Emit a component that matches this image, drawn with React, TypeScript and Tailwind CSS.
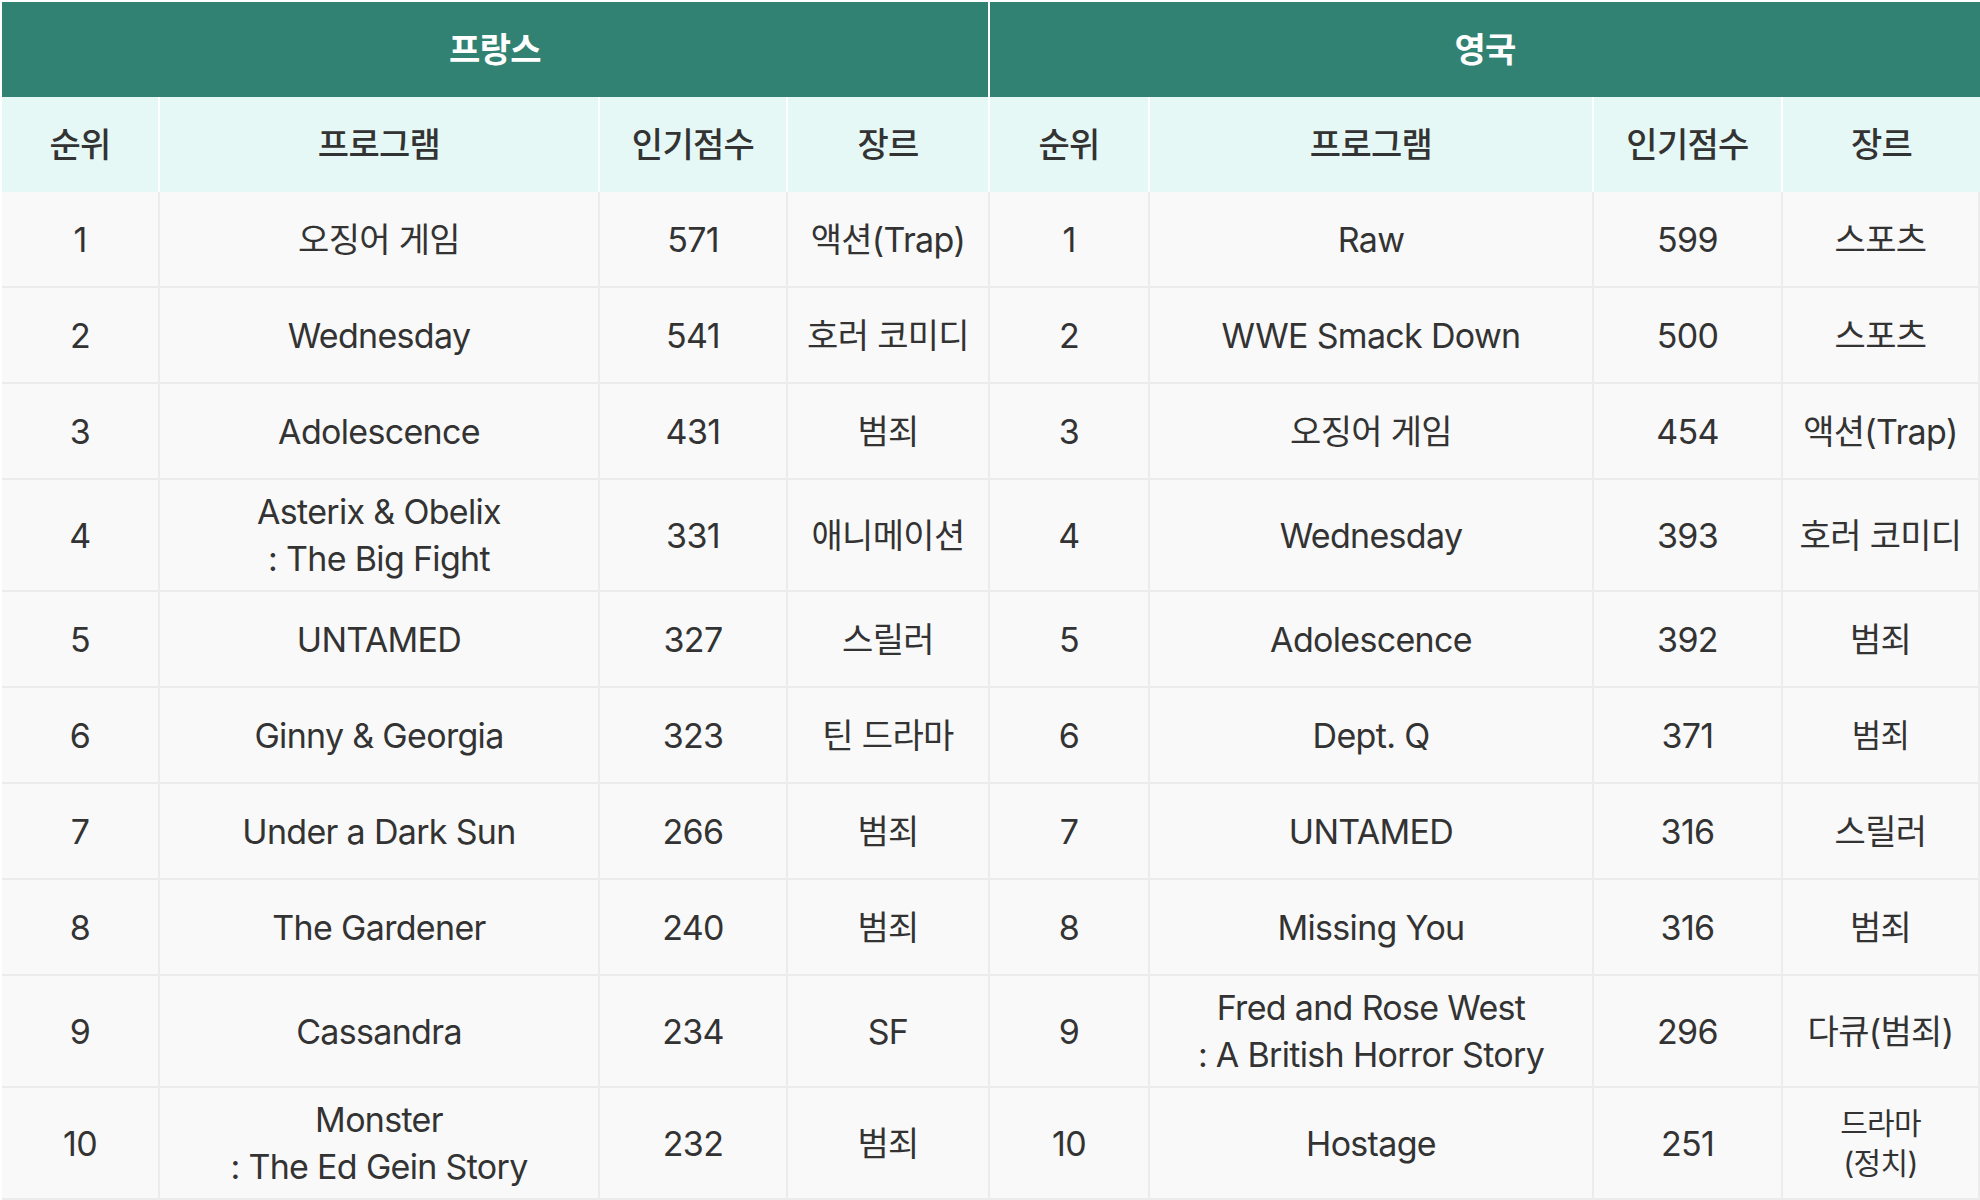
import React from "react";

type Row = {
  rank: number;
  title: string[];
  score: string;
  genre: string[];
  small?: boolean;
};

const france: Row[] = [
  { rank: 1, title: ["오징어 게임"], score: "571", genre: ["액션(Trap)"] },
  { rank: 2, title: ["Wednesday"], score: "541", genre: ["호러 코미디"] },
  { rank: 3, title: ["Adolescence"], score: "431", genre: ["범죄"] },
  { rank: 4, title: ["Asterix & Obelix", ": The Big Fight"], score: "331", genre: ["애니메이션"] },
  { rank: 5, title: ["UNTAMED"], score: "327", genre: ["스릴러"] },
  { rank: 6, title: ["Ginny & Georgia"], score: "323", genre: ["틴 드라마"] },
  { rank: 7, title: ["Under a Dark Sun"], score: "266", genre: ["범죄"] },
  { rank: 8, title: ["The Gardener"], score: "240", genre: ["범죄"] },
  { rank: 9, title: ["Cassandra"], score: "234", genre: ["SF"] },
  { rank: 10, title: ["Monster", ": The Ed Gein Story"], score: "232", genre: ["범죄"] },
];

const uk: Row[] = [
  { rank: 1, title: ["Raw"], score: "599", genre: ["스포츠"] },
  { rank: 2, title: ["WWE Smack Down"], score: "500", genre: ["스포츠"] },
  { rank: 3, title: ["오징어 게임"], score: "454", genre: ["액션(Trap)"] },
  { rank: 4, title: ["Wednesday"], score: "393", genre: ["호러 코미디"] },
  { rank: 5, title: ["Adolescence"], score: "392", genre: ["범죄"] },
  { rank: 6, title: ["Dept. Q"], score: "371", genre: ["범죄"], small: true },
  { rank: 7, title: ["UNTAMED"], score: "316", genre: ["스릴러"] },
  { rank: 8, title: ["Missing You"], score: "316", genre: ["범죄"] },
  { rank: 9, title: ["Fred and Rose West", ": A British Horror Story"], score: "296", genre: ["다큐(범죄)"] },
  { rank: 10, title: ["Hostage"], score: "251", genre: ["드라마", "(정치)"] },
];

const td = "border-r-2 border-b-2 border-[#ececec] text-center align-middle px-1";
const th = "border-r-2 border-white text-center align-middle font-medium";

function Lines({ lines, className }: { lines: string[]; className?: string }) {
  return (
    <div className={className}>
      {lines.map((l, i) => (
        <div key={i}>{l}</div>
      ))}
    </div>
  );
}

export default function App() {
  return (
    <div
      className="w-[1980px] h-[1200px] overflow-hidden bg-white pt-[2px] pl-[2px] text-[#333333]"
      style={{ fontFamily: 'Inter, "Noto Sans CJK KR", sans-serif' }}
    >
      <table className="table-fixed border-separate border-spacing-0 w-[1978px] text-[34px] leading-[47px] tracking-[-0.02em]">
        <colgroup>
          <col className="w-[158px]" />
          <col className="w-[440px]" />
          <col className="w-[188px]" />
          <col className="w-[202px]" />
          <col className="w-[160px]" />
          <col className="w-[444px]" />
          <col className="w-[189px]" />
          <col className="w-[197px]" />
        </colgroup>
        <thead>
          <tr className="h-[95px] bg-[#318272] text-white">
            <th colSpan={4} className="border-r-2 border-white font-semibold">
              프랑스
            </th>
            <th colSpan={4} className="font-semibold">
              영국
            </th>
          </tr>
          <tr className="h-[95px] bg-[#e6f8f5]">
            <th className={th}>순위</th>
            <th className={th}>프로그램</th>
            <th className={th}>인기점수</th>
            <th className={th}>장르</th>
            <th className={th}>순위</th>
            <th className={th}>프로그램</th>
            <th className={th}>인기점수</th>
            <th className="text-center align-middle font-medium">장르</th>
          </tr>
        </thead>
        <tbody className="bg-[#f9f9f9]">
          {france.map((f, i) => {
            const u = uk[i];
            const tall = f.title.length > 1 || u.title.length > 1 || u.genre.length > 1;
            return (
              <tr key={i} className={tall ? "h-[112px]" : "h-[96px]"}>
                <td className={td}>{f.rank}</td>
                <td className={td}>
                  <Lines lines={f.title} />
                </td>
                <td className={td}>{f.score}</td>
                <td className={td}>
                  <Lines lines={f.genre} />
                </td>
                <td className={td}>{u.rank}</td>
                <td className={td}>
                  <Lines lines={u.title} />
                </td>
                <td className={td}>{u.score}</td>
                <td className={td}>
                  <Lines
                    lines={u.genre}
                    className={
                      u.genre.length > 1
                        ? "text-[30px] leading-[40px]"
                        : u.small
                        ? "text-[32px]"
                        : ""
                    }
                  />
                </td>
              </tr>
            );
          })}
        </tbody>
      </table>
    </div>
  );
}
